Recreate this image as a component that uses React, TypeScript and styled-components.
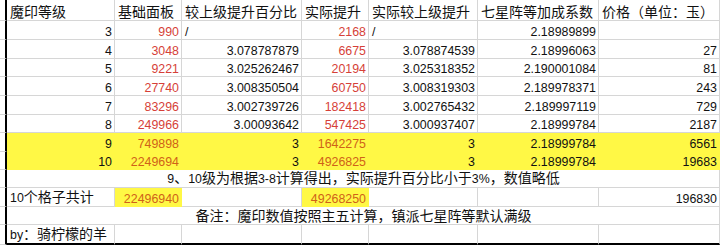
import React from 'react';
import styled, { createGlobalStyle, css } from 'styled-components';

const GlobalStyle = createGlobalStyle`
  html, body {
    margin: 0;
    padding: 0;
    background: #ffffff;
  }
`;

const GRID = '#d6d6d6';
const YELLOW = '#fff845';

const Sheet = styled.div`
  display: grid;
  grid-template-columns: 7px 108px 67px 120px 67px 109px 121px 121px;
  grid-template-rows: 21px 19px 19px 18px 19px 19px 18px 19px 18px 18px 19px 18px 20px;
  width: 720px;
  overflow: hidden;
  font-family: 'Liberation Sans', 'Noto Sans CJK SC', sans-serif;
  color: #111;
`;

const Gutter = styled.div`
  border-right: 2px solid #000;
  border-bottom: 1px solid ${GRID};
`;

type Align = 'left' | 'right' | 'center';
type Tone = 'red' | 'orange';

const Cell = styled.div<{ $align?: Align; $fill?: boolean; $tone?: Tone; $num?: boolean; $last?: boolean; $span?: boolean }>`
  display: flex;
  align-items: flex-end;
  justify-content: ${p => (p.$align === 'right' ? 'flex-end' : p.$align === 'center' ? 'center' : 'flex-start')};
  padding: 0 2px 0 3px;
  border-right: 1px solid ${p => (p.$fill ? YELLOW : GRID)};
  border-bottom: 1px solid ${p => (p.$fill ? YELLOW : GRID)};
  background: ${p => (p.$fill ? YELLOW : 'transparent')};
  font-size: ${p => (p.$num ? '12.4px' : '14px')};
  line-height: ${p => (p.$num ? '14px' : '15px')};
  white-space: nowrap;
  color: ${p => (p.$tone === 'red' ? '#d63f38' : p.$tone === 'orange' ? '#cf6218' : '#111')};
  ${p => p.$span && css`grid-column: 2 / -1;`}
  ${p => p.$last && css`border-bottom: 2px solid #000;`}
`;

const Latin = styled.span`
  font-size: 12.4px;
`;

type Level = {
  lv: string;
  base: string;
  ratio: string;
  real: string;
  realRatio: string;
  coef: string;
  price: string;
  hl?: boolean;
};

const levels: Level[] = [
  { lv: '3', base: '990', ratio: '/', real: '2168', realRatio: '/', coef: '2.18989899', price: '' },
  { lv: '4', base: '3048', ratio: '3.078787879', real: '6675', realRatio: '3.078874539', coef: '2.18996063', price: '27' },
  { lv: '5', base: '9221', ratio: '3.025262467', real: '20194', realRatio: '3.025318352', coef: '2.190001084', price: '81' },
  { lv: '6', base: '27740', ratio: '3.008350504', real: '60750', realRatio: '3.008319303', coef: '2.189978371', price: '243' },
  { lv: '7', base: '83296', ratio: '3.002739726', real: '182418', realRatio: '3.002765432', coef: '2.189997119', price: '729' },
  { lv: '8', base: '249966', ratio: '3.00093642', real: '547425', realRatio: '3.000937407', coef: '2.18999784', price: '2187' },
  { lv: '9', base: '749898', ratio: '3', real: '1642275', realRatio: '3', coef: '2.18999784', price: '6561', hl: true },
  { lv: '10', base: '2249694', ratio: '3', real: '4926825', realRatio: '3', coef: '2.18999784', price: '19683', hl: true },
];

const headers = ['魔印等级', '基础面板', '较上级提升百分比', '实际提升', '实际较上级提升', '七星阵等加成系数', '价格（单位：玉）'];

const RatioCell: React.FC<{ value: string; fill?: boolean }> = ({ value, fill }) =>
  value === '/' ? (
    <Cell $num $fill={fill}>/</Cell>
  ) : (
    <Cell $num $align="right" $fill={fill}>{value}</Cell>
  );

const App: React.FC = () => {
  return (
    <>
      <GlobalStyle />
      <Sheet>
        <Gutter />
        {headers.map(h => (
          <Cell key={h}>{h}</Cell>
        ))}

        {levels.map(r => (
          <React.Fragment key={r.lv}>
            <Gutter />
            <Cell $num $align="right" $fill={r.hl}>{r.lv}</Cell>
            <Cell $num $align="right" $fill={r.hl} $tone={r.hl ? 'orange' : 'red'}>{r.base}</Cell>
            <RatioCell value={r.ratio} fill={r.hl} />
            <Cell $num $align="right" $fill={r.hl} $tone={r.hl ? 'orange' : 'red'}>{r.real}</Cell>
            <RatioCell value={r.realRatio} fill={r.hl} />
            <Cell $num $align="right" $fill={r.hl}>{r.coef}</Cell>
            <Cell $num $align="right" $fill={r.hl}>{r.price}</Cell>
          </React.Fragment>
        ))}

        <Gutter />
        <Cell $span $align="center">
          <span>
            <Latin>9</Latin>、<Latin>10</Latin>级为根据<Latin>3-8</Latin>计算得出，实际提升百分比小于<Latin>3%</Latin>，数值略低
          </span>
        </Cell>

        <Gutter />
        <Cell>
          <span>
            <Latin>10</Latin>个格子共计
          </span>
        </Cell>
        <Cell $num $align="right" $fill $tone="orange">22496940</Cell>
        <Cell />
        <Cell $num $align="right" $fill $tone="orange">49268250</Cell>
        <Cell />
        <Cell />
        <Cell $num $align="right">196830</Cell>

        <Gutter />
        <Cell $span $align="center">备注：魔印数值按照主五计算，镇派七星阵等默认满级</Cell>

        <Gutter />
        <Cell $last>
          <span>
            <Latin>by</Latin>：骑柠檬的羊
          </span>
        </Cell>
        <Cell $last />
        <Cell $last />
        <Cell $last />
        <Cell $last />
        <Cell $last />
        <Cell $last />
      </Sheet>
    </>
  );
};

export default App;
